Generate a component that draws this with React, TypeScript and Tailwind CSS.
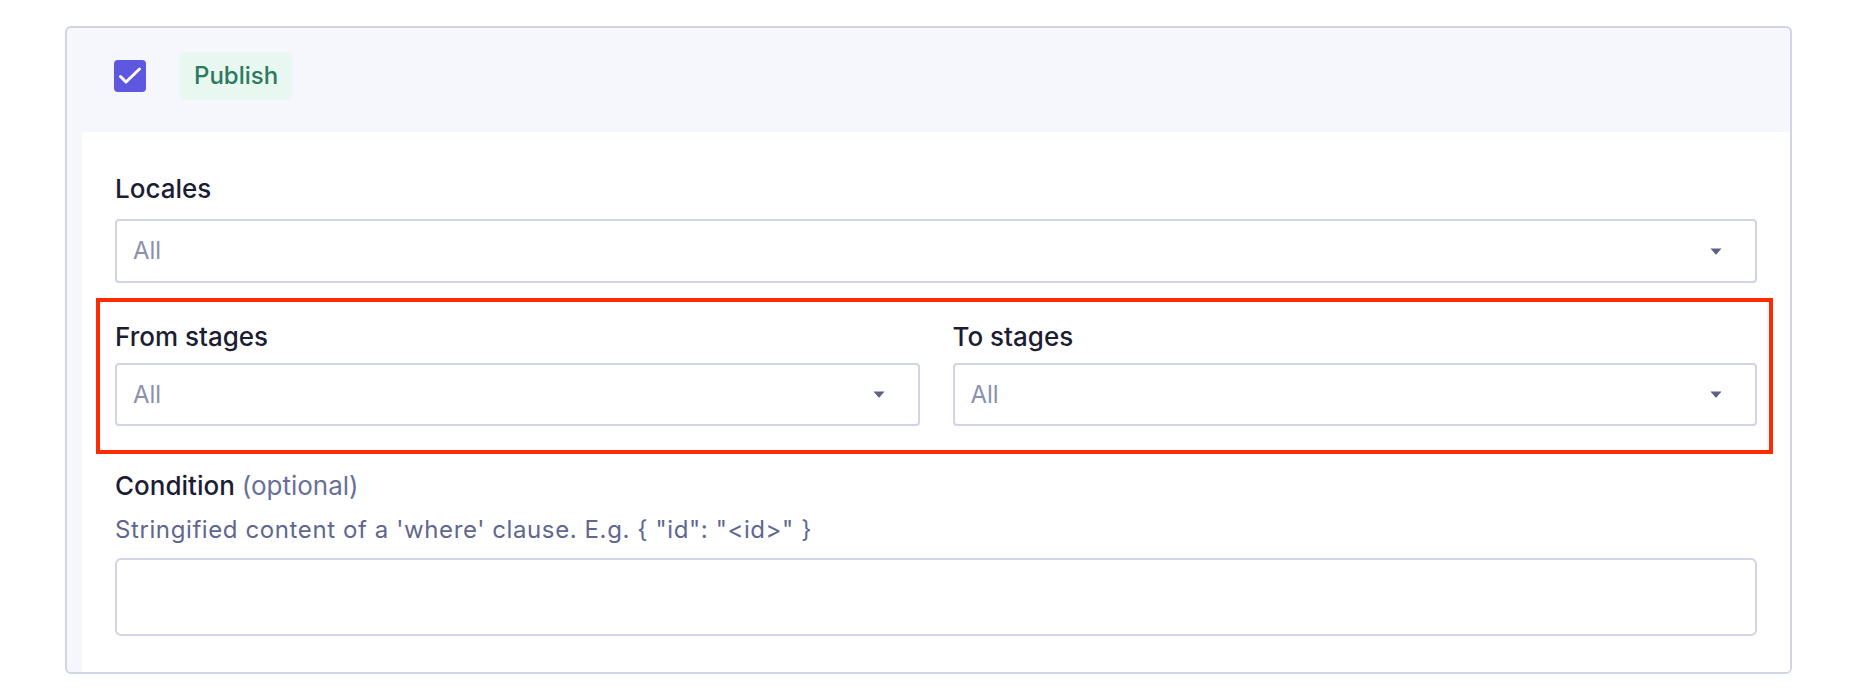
import React from "react";

const font = { fontFamily: "Inter, 'Noto Sans', sans-serif" };

function Caret() {
  return (
    <svg width="12" height="7" viewBox="0 0 12 7" className="shrink-0">
      <path d="M0.5 0.5h11L6.6 6.2a0.8 0.8 0 0 1-1.2 0z" fill="#5b6287" />
    </svg>
  );
}

function SelectBox({ value, height = "h-[64px]" }: { value: string; height?: string }) {
  return (
    <div
      className={`${height} flex items-center justify-between rounded-[4px] border-2 border-[#d0d4e4] bg-white pl-4 pr-[33px]`}
    >
      <span className="text-[24px] text-[#8a90ad]">{value}</span>
      <Caret />
    </div>
  );
}

function Label({ children }: { children: React.ReactNode }) {
  return (
    <div className="text-[26px] leading-8 font-medium text-[#1c1d33]">
      {children}
    </div>
  );
}

export default function App() {
  return (
    <div className="min-h-screen bg-white pt-[26px] pl-[65px] pr-[74px]" style={font}>
      <div className="overflow-hidden rounded-md border-2 border-[#d0d4e4] bg-[#f6f7fc]">
        {/* Header */}
        <div className="flex items-center gap-[33px] pl-[47px] pt-6 pb-8">
          <div className="flex h-8 w-8 items-center justify-center rounded-[4px] bg-[#5e57e0]">
            <svg width="32" height="32" viewBox="0 0 32 32">
              <path
                d="M6.5 16.5l5.5 5.5L25.5 9"
                fill="none"
                stroke="white"
                strokeWidth="3"
                strokeLinecap="round"
                strokeLinejoin="round"
              />
            </svg>
          </div>
          <span className="flex h-12 items-center rounded-lg bg-[#e8f7ef] px-[15px] text-[24px] font-medium text-[#2b7a5f]">
            Publish
          </span>
        </div>

        {/* Body */}
        <div className="ml-[15px] bg-white px-[33px] pt-[41px] pb-[36px]">
          <Label>Locales</Label>
          <div className="mt-[14px]">
            <SelectBox value="All" />
          </div>

          <div className="mt-[15px] -ml-[19px] -mr-[16px] grid grid-cols-2 gap-x-[33px] border-4 border-[#ff2a00] pl-[15px] pr-[12px] pt-[19px] pb-[24px]">
            <div>
              <Label>From stages</Label>
              <div className="mt-[10px]">
                <SelectBox value="All" height="h-[63px]" />
              </div>
            </div>
            <div>
              <Label>To stages</Label>
              <div className="mt-[10px]">
                <SelectBox value="All" height="h-[63px]" />
              </div>
            </div>
          </div>

          <div className="mt-4">
            <Label>
              Condition <span className="font-normal text-[#68709a]">(optional)</span>
            </Label>
          </div>
          <p className="mt-3 text-[24px] leading-8 tracking-[0.6px] text-[#5f6790]">
            Stringified content of a 'where' clause. E.g. {'{ "id": "<id>" }'}
          </p>
          <div className="mt-3 h-[78px] rounded-md border-2 border-[#d0d4e4] bg-white" />
        </div>
      </div>
    </div>
  );
}
